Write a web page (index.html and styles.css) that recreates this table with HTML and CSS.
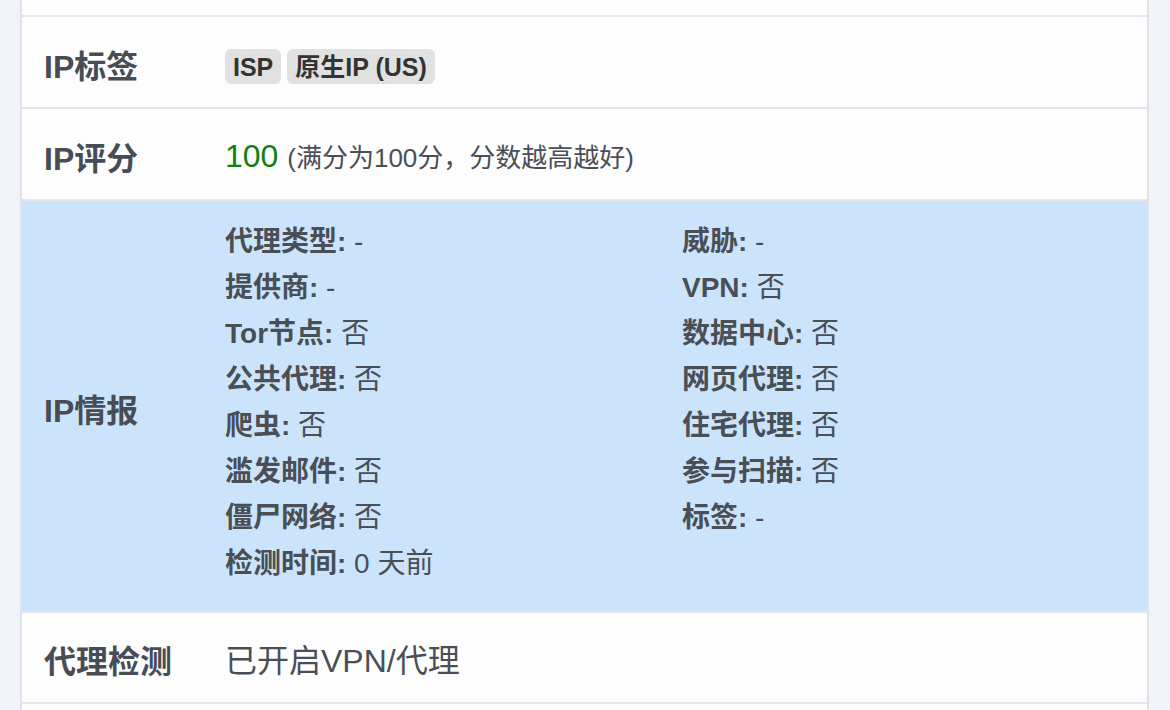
FILE: index.html
```html
<!DOCTYPE html>
<html lang="zh-CN">
<head>
<meta charset="utf-8">
<title>IP 信息</title>
<link rel="stylesheet" href="styles.css">
</head>
<body>
<div class="page">
  <div class="table">
    <div class="row row-top"></div>
    <div class="row">
      <div class="label">IP标签</div>
      <div class="value">
        <span class="tag">ISP</span><span class="tag">原生IP (US)</span>
      </div>
    </div>
    <div class="row">
      <div class="label">IP评分</div>
      <div class="value value-score"><span class="score">100</span> <span class="note">(满分为100分，分数越高越好)</span></div>
    </div>
    <div class="row row-info">
      <div class="label">IP情报</div>
      <div class="value">
        <div class="info-grid">
          <div class="info-col">
            <div class="item"><b>代理类型:</b> -</div>
            <div class="item"><b>提供商:</b> -</div>
            <div class="item"><b>Tor节点:</b> 否</div>
            <div class="item"><b>公共代理:</b> 否</div>
            <div class="item"><b>爬虫:</b> 否</div>
            <div class="item"><b>滥发邮件:</b> 否</div>
            <div class="item"><b>僵尸网络:</b> 否</div>
            <div class="item"><b>检测时间:</b> 0 天前</div>
          </div>
          <div class="info-col">
            <div class="item"><b>威胁:</b> -</div>
            <div class="item"><b>VPN:</b> 否</div>
            <div class="item"><b>数据中心:</b> 否</div>
            <div class="item"><b>网页代理:</b> 否</div>
            <div class="item"><b>住宅代理:</b> 否</div>
            <div class="item"><b>参与扫描:</b> 否</div>
            <div class="item"><b>标签:</b> -</div>
          </div>
        </div>
      </div>
    </div>
    <div class="row row-last">
      <div class="label">代理检测</div>
      <div class="value">已开启VPN/代理</div>
    </div>
    <div class="row row-next"></div>
  </div>
</div>
</body>
</html>
```

FILE: styles.css
```css
* { box-sizing: border-box; }
html, body {
  margin: 0;
  padding: 0;
  background: #f0f3f7;
  height: 710px;
  overflow: hidden;
}
body {
  font-family: "Liberation Sans", "Noto Sans CJK SC", sans-serif;
  color: #4a4f56;
}
.page {
  padding-left: 20px;
  width: 1149px;
}
.table {
  border-left: 2px solid #dfe2e7;
  border-right: 2px solid #dfe2e7;
  background: #fdfdfe;
}
.row {
  display: flex;
  align-items: center;
  border-bottom: 2px solid #e3e6ea;
  height: 92px;
}
.row-top { height: 17px; }
.row-info {
  height: 412px;
  background: #cce4fb;
  align-items: stretch;
}
.row-info .label { align-self: center; }
.row-last { height: 91px; }
.row-next { height: 20px; border-bottom: none; }
.label {
  width: 181px;
  flex: none;
  padding-left: 22px;
  padding-top: 3px;
  font-size: 32px;
  font-weight: 700;
  color: #484d55;
}
.value {
  flex: 1;
  padding-left: 22px;
  font-size: 32px;
  color: #4a4f56;
}
.value-score { padding-top: 4px; }
.tag {
  display: inline-block;
  background: #e1e1e1;
  color: #333;
  font-size: 25px;
  font-weight: 700;
  line-height: 30px;
  padding: 3px 8px 2px 8px;
  border-radius: 6px;
  margin-right: 6px;
  margin-top: 8px;
}
.score {
  color: #108010;
  font-size: 32px;
}
.note {
  font-size: 26px;
}
.info-grid {
  display: grid;
  grid-template-columns: 457px 1fr;
  padding-top: 18px;
}
.item {
  font-size: 28px;
  line-height: 46px;
  white-space: nowrap;
}
.item b { font-weight: 700; }
```
